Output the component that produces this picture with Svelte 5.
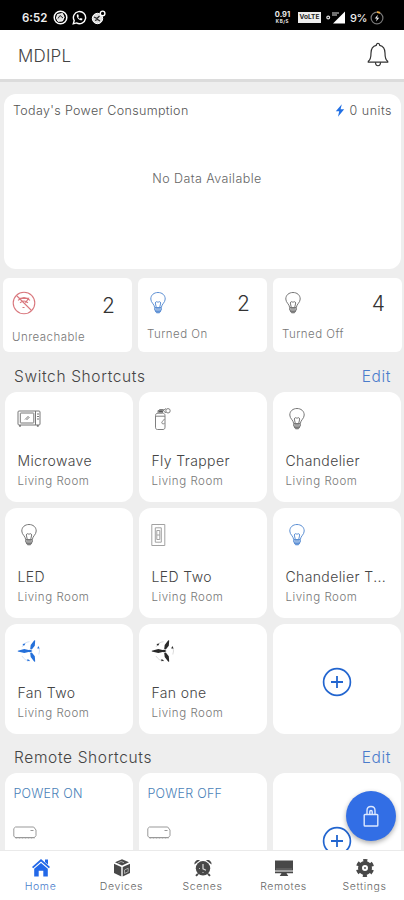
<script>
  const stats = [
    { icon: 'unreachable', label: 'Unreachable', count: 2, low: true },
    { icon: 'bulb-on', label: 'Turned On', count: 2 },
    { icon: 'bulb', label: 'Turned Off', count: 4 }
  ];
  const switches = [
    { icon: 'microwave', name: 'Microwave' },
    { icon: 'spray', name: 'Fly Trapper' },
    { icon: 'bulb', name: 'Chandelier' },
    { icon: 'bulb', name: 'LED' },
    { icon: 'switch', name: 'LED Two' },
    { icon: 'bulb-on', name: 'Chandelier T...' },
    { icon: 'fan-on', name: 'Fan Two' },
    { icon: 'fan', name: 'Fan one' }
  ];
  const tabs = ['Home', 'Devices', 'Scenes', 'Remotes', 'Settings'];
</script>

{#snippet plus()}
  <svg class="plus" width="30" height="30" viewBox="0 0 30 30" fill="none" stroke="#2265cf">
    <circle cx="15" cy="15" r="13.4" stroke-width="1.7" />
    <path d="M15 9v12M9 15h12" stroke-width="1.8" />
  </svg>
{/snippet}

{#snippet glyph(icon)}
  {#if icon === 'bulb' || icon === 'bulb-on'}
    <svg width="24" height="24" viewBox="0 0 24 24" fill="none" stroke={icon === 'bulb' ? '#777' : '#5d90d4'} stroke-width="1">
      <path d="M8.7 16.5C8.3 13 4.8 11.600 4.800 8C4.800 4 8 1.500 12 1.500S19.200 4 19.200 8C19.200 11.600 15.700 13 15.300 16.500" />
      <path d="M8.700 16.500h6.600v2.700H8.700zM9.500 19.200l1 2.600h3l1-2.600M9 20.400h6" />
      <path d="M10.200 16l-.9-4c.5-1.700 1.700-1.700 2.700-.5 1-1.200 2.200-1.200 2.700.5l-.9 4" />
      <path d="M10.500 21h3M9.300 17.900h5.400" stroke-width="1.400" />
    </svg>
  {:else if icon === 'unreachable'}
    <svg width="24" height="24" viewBox="0 0 24 24" fill="none" stroke="#d9777d" stroke-width="1.100">
      <circle cx="12" cy="12" r="10.800" />
      <path d="M4.500 4.500l15 15M6 9.300C9.800 5.900 14.200 5.900 18 9.300M8 11.800c2.500-2.200 5.500-2.200 8 0M7 7.400h9.500l-3 4.500M10.500 16.500h2" />
    </svg>
  {:else if icon === 'microwave'}
    <svg width="24" height="24" viewBox="0 0 24 24" fill="none" stroke="#777" stroke-width="1">
      <rect x="1" y="4" width="22" height="14" rx="1" />
      <rect x="3.300" y="6" width="13.500" height="10" rx=".5" />
      <path d="M18.500 4v14M8 12.500l3.500-3.500M9.500 13l3-3" />
      <path d="M20 7h2M20 9.500h2M20 12h2" />
      <path d="M3 18v1.700M20.800 18v1.700" stroke-width="1.800" />
    </svg>
  {:else if icon === 'spray'}
    <svg width="24" height="24" viewBox="0 0 24 24" fill="none" stroke="#808080" stroke-width="1">
      <path d="M4.500 8.500c0-1.500 1-2.300 2.500-2.300h4.500c1.500 0 2.500.8 2.500 2.300v11.700c0 1.500-.7 2.300-2 2.300H6.500c-1.300 0-2-.8-2-2.300zM4.500 9.200H14" />
      <path d="M7 5.800V3.500h4.500v2.300M8.500 2.500h4v1.500h-4zM13 3l2-1.500M13 4.500l2 1.200M13.500 12c-1.600 2-3 3-2.700 4 .4 1 1.700 1.100 2.700.4" />
      <circle cx="17" cy="3.800" r="2.200" />
      <path d="M7.500 4.800h4" stroke="#444" stroke-width="1.300" />
    </svg>
  {:else if icon === 'switch'}
    <svg width="24" height="24" viewBox="0 0 24 24" fill="none" stroke="#a2a2a2" stroke-width="1">
      <path d="M.8 1.500h13v21H.8zM4.300 4.800h6v14.400h-6zM5.800 7.500h3v9h-3zM5.800 12h3M7.300 3h.1M7.300 21h.1" />
    </svg>
  {:else}
    <svg width="24" height="24" viewBox="0 0 24 24" fill={icon === 'fan' ? '#292929' : '#2470da'}>
      <path d="M13.500 10.800l2 1.200-2 1.300-2-.2-4.200.9L.8 12.400v-.7l6.500-1.600 4.200.8z" />
      <path d="M13.200 10l.5-4 3.600-4.700.9.300-.4 5.200-3 3.600zM13.200 14l.5 4 3.600 4.700.9-.3-.4-5.200-3-3.600z" />
      <path d="M5 8a9 9 0 0 1 7.500-5.300M5 17a10 10 0 0 0 8 5M21.800 8.500a9 9 0 0 1 0 7" fill="none" stroke={icon === 'fan' ? '#ccc' : '#bfd4f2'} stroke-width=".7" />
      <path d="M5.500 5l3-.4-1.600 2.500zM10.500 20l2.600 1.500-2.800.8zM21.300 7l1.300 2.500h-2.400z" />
    </svg>
  {/if}
{/snippet}

<div class="screen">
  <div class="status">
    <div class="left">
      <b class="clock">6:52</b>
      <svg width="15" height="15" viewBox="0 0 15 15" fill="none" stroke="#fff">
        <circle cx="7.500" cy="7.500" r="6.300" stroke-width="1.500" />
        <path d="M4.500 4.500l5-1 1.600 3.800-1.600 3.700-4.500.3L3.500 8z" fill="#ddd" stroke-width="1" />
        <path d="M5 8.500l2-3 3 2.500" stroke="#222" />
      </svg>
      <svg width="15" height="15" viewBox="0 0 15 15" fill="none" stroke="#fff">
        <path d="M1.300 13.800l.9-3.200A6.100 6.100 0 1 1 4.500 12.900z" stroke-width="1.400" />
        <path d="M5 4.500c-1 3 2 6 5 5.800l.5-1.500-1.800-.8-.8.8C6.900 8.300 6.500 7.700 6.200 7l.7-.8-.8-1.900z" fill="#fff" stroke="none" />
      </svg>
      <svg width="15" height="15" viewBox="0 0 15 15" fill="none" stroke="#fff">
        <circle cx="6.500" cy="8.500" r="5.200" fill="#ddd" />
        <path d="M3 7l3 1.500L8.500 6M4 10.500l2.500-1 2.500 1.500" stroke="#222" stroke-width="1.200" />
        <circle cx="11.600" cy="3.400" r="2.300" fill="#000" stroke-width="1.400" />
      </svg>
    </div>
    <div class="right">
      <div class="speed"><b>0.91</b><b class="kb">KB/S</b></div>
      <b class="volte">VoLTE</b>
      <svg class="signal" width="20" height="13" viewBox="0 0 20 13">
        <circle cx="2.200" cy="6.500" r="1.400" fill="none" stroke="#ddd" stroke-width="1.200" />
        <path d="M19 .5V12.500H7z" fill="#fff" />
        <path d="M6 2h7M6 4h5" stroke="#ddd" stroke-width="1.200" />
      </svg>
      <b class="battery">9%</b>
      <svg width="14" height="14" viewBox="0 0 14 14" fill="none">
        <circle cx="7" cy="7" r="5.900" stroke="#777" stroke-width="1.200" />
        <path d="M7 1.100a5.900 5.900 0 0 1 3 .8" stroke="#e8a640" stroke-width="1.800" />
        <path d="M7.800 3.800L4.800 7.500h2l-.7 3L9.200 6.700h-2z" fill="#eee" />
      </svg>
    </div>
  </div>

  <header>
    <h1>MDIPL</h1>
    <svg width="22" height="26" viewBox="0 0 22 26" fill="none" stroke="#333" stroke-width="1.200">
      <path d="M9.300 3.300c0-2.600 3.400-2.600 3.400 0C16.600 4.200 18 7.300 18 11c0 5 .6 7 2.700 8.300v.9H1.300v-.9C3.400 18 4 16 4 11c0-3.700 1.400-6.800 5.300-7.700z" />
      <path d="M8.500 20.300c0 4.600 5 4.600 5 0" />
    </svg>
  </header>

  <main>
    <section class="power">
      <div class="power-head">
        <span class="title">Today's Power Consumption</span>
        <span class="units">
          <svg width="10" height="13" viewBox="0 0 10 13" fill="#2270e4"><path d="M6.800.3L.8 7.300h3.400L3 12.700l6.200-7.400H5.600z" /></svg>
          0 units
        </span>
      </div>
      <p>No Data Available</p>
    </section>

    <div class="stats">
      {#each stats as s}
        <div class="stat" class:low={s.low}>
          <div class="stat-top">{@render glyph(s.icon)}<span class="count">{s.count}</span></div>
          <span class="stat-label">{s.label}</span>
        </div>
      {/each}
    </div>

    <div class="heading"><h2>Switch Shortcuts</h2><a href="#switches">Edit</a></div>
    <div class="grid">
      {#each switches as s}
        <div class="card">
          {@render glyph(s.icon)}
          <span class="name">{s.name}</span>
          <span class="room">Living Room</span>
        </div>
      {/each}
      <div class="card add">{@render plus()}</div>
    </div>

    <div class="heading second"><h2>Remote Shortcuts</h2><a href="#remotes">Edit</a></div>
    <div class="grid remotes">
      {#each ['POWER ON', 'POWER OFF'] as label}
        <div class="card remote">
          <span>{label}</span>
          <svg width="24" height="13" viewBox="0 0 24 13" fill="none" stroke="#999">
            <path d="M2.500 1h18.200l2.300 3v5.500L21.500 11.500H2L.8 10V2.500z" />
            <path d="M2.500 11.700h19" stroke-width="1.600" stroke-dasharray="2 1" />
            <path d="M17.500 4.500h3" />
          </svg>
        </div>
      {/each}
      <div class="card add cut">{@render plus()}</div>
    </div>
  </main>

  <nav>
    {#each tabs as tab, i}
      <div class="tab" class:active={i === 0}>
        <svg width="20" height="20" viewBox="0 0 20 20" fill="#484848">
          {#if i === 0}
            <path d="M10 1l9 8-1.200 1.300L10 3.600l-7.800 6.700L1 9zM14 1.500h3v5l-3-2.600z" fill="#2268e8" />
            <path d="M10 5l6.800 5.800V18.500h-4.500v-5.700H7.700v5.700H3.200v-7.700z" fill="#2268e8" />
          {:else if i === 1}
            <path d="M10 1.300l7 3-7 3.300-7-3.300zM2 5.700l7.300 3.400v9.400L2 15zM18 5.700l-7.300 3.400v9.400L18 15z" />
            <path d="M12.500 12l3.700-1.800v3.500l-3.700 1.800zM6 5l3-1.500 3 1.200" stroke="#bbb" stroke-width=".8" fill="none" />
          {:else if i === 2}
            <path d="M1.500 6.500C1 3.500 4 1 7 2.200zM18.500 6.500C19 3.500 16 1 13 2.200zM4.200 15.200l1.500 1.400-2 2-1.400-1.400zM15.800 15.200l-1.500 1.400 2 2 1.400-1.400z" />
            <circle cx="10" cy="10.300" r="7.200" />
            <path d="M10 6v4.800l3 1.400M6 10.500h.8M10 14.700v-.8" fill="none" stroke="#ddd" stroke-width="1.200" />
          {:else if i === 3}
            <path d="M1 2.500h18v10H1zM1 13.500h18v1.800h-6.500l1.800 2.700H5.700l1.800-2.700H1z" />
            <path d="M2 11h16" stroke="#888" stroke-width=".7" />
          {:else}
            <circle cx="10" cy="10" r="5" fill="none" stroke="#484848" stroke-width="4" />
            <circle cx="10" cy="10" r="7.600" fill="none" stroke="#484848" stroke-width="3" stroke-dasharray="4 3.960" stroke-dashoffset="-2" />
            <circle cx="10" cy="10" r=".9" />
          {/if}
        </svg>
        <span>{tab}</span>
      </div>
    {/each}
  </nav>

  <button class="fab" aria-label="Lock">
    <svg width="18" height="24" viewBox="0 0 18 24" fill="none" stroke="#dce8ff" stroke-width="1.400">
      <rect x="2.200" y="10.500" width="13.600" height="11.500" rx=".8" />
      <path d="M5 10.500V6.500c0-5.300 8-5.300 8 0v4M7.800 10V7.700c0-1.700 2.400-1.700 2.400 0V10" />
    </svg>
  </button>
</div>

<style>
  :global(body) { margin: 0; }
  .screen {
    position: relative; width: 404px; height: 900px; overflow: hidden;
    display: flex; flex-direction: column; background: #eee;
    font-family: Inter, "Liberation Sans", sans-serif; font-weight: 300; color: #555;
  }
  .screen * { box-sizing: border-box; }
  svg { display: block; flex: none; }
  h1, h2, p { margin: 0; font-weight: 300; }
  .status {
    height: 30px; flex: none; background: #000; color: #eee;
    display: flex; justify-content: space-between; align-items: center; padding: 5px 20px 0 22px;
  }
  .left, .right { display: flex; align-items: center; }
  .left { gap: 4px; }
  .clock { font: 600 11.500px/14px Inter, sans-serif; width: 27px; }
  .speed { display: flex; flex-direction: column; align-items: center; width: 17px; margin-right: 7px; }
  .speed b { font: 700 7.500px/9px Inter, sans-serif; }
  .speed .kb { font-size: 4.500px; line-height: 6px; letter-spacing: .6px; }
  .volte {
    width: 23px; height: 11px; background: #eee; color: #222; text-align: center;
    font: 700 6.500px/11px Inter, sans-serif; margin-right: 5px;
  }
  .battery { font: 500 11px/14px Inter, sans-serif; width: 17px; margin: 0 3px 0 4px; white-space: nowrap; letter-spacing: -.5px; }
  header {
    height: 52px; flex: none; background: #fff; border-bottom: 3px solid #dcdcdc;
    display: flex; justify-content: space-between; align-items: center; padding: 0 15px 0 18px;
  }
  h1 { font-size: 17px; letter-spacing: .2px; color: #444; padding-top: 2px; }
  main { flex: 1; min-height: 0; overflow: hidden; padding-top: 12px; }
  .power { margin: 0 3px 0 4px; height: 175px; background: #fff; border-radius: 12px; padding: 9px 9px 0; }
  .power-head { display: flex; justify-content: space-between; align-items: center; height: 15px; font-size: 12.500px; }
  .title { letter-spacing: .35px; }
  .units { display: flex; align-items: center; gap: 5px; letter-spacing: .5px; }
  .power p { text-align: center; font-size: 12.500px; line-height: 16px; letter-spacing: .42px; padding: 53px 0 0 9px; color: #666; }
  .stats { display: grid; grid-template-columns: repeat(3, 129px); gap: 6px; padding: 9px 0 0 3px; }
  .stat { height: 74px; background: #fff; border-radius: 6px; padding: 13px 17px 0 9px; }
  .stat-top { display: flex; justify-content: space-between; align-items: center; height: 24px; }
  .stat:not(.low) .stat-top > :global(svg) { margin-left: -1px; }
  .count { font-size: 21px; line-height: 24px; color: #333; padding-top: 1px; }
  .low .count { padding-top: 5px; }
  .stat-label { display: block; padding-top: 12px; font-size: 11.500px; line-height: 15px; letter-spacing: .46px; color: #777; }
  .low .stat-label { padding-top: 15px; }
  .heading { height: 40px; padding: 9px 13px 0 14px; display: flex; justify-content: space-between; }
  .heading.second { height: 39px; padding-top: 8px; }
  h2, .heading a { font-size: 15.500px; line-height: 31px; letter-spacing: .64px; }
  h2 { color: #444; }
  .heading a { color: #4a7ccb; text-decoration: none; }
  .grid { display: grid; grid-template-columns: repeat(3, 128px); gap: 6px; padding-left: 5px; }
  .card { height: 110px; background: #fff; border-radius: 12px; padding: 15px 8px 0 12.400px; display: flex; flex-direction: column; white-space: nowrap; }
  .name { font-size: 14px; line-height: 18px; letter-spacing: .4px; margin-top: 21.400px; color: #444; }
  .room { font-size: 11.500px; line-height: 15px; letter-spacing: .55px; margin-top: 3.600px; color: #777; }
  .add { justify-content: center; align-items: center; padding: 5px 1px 0 0; }
  .remote { padding: 13px 0 0 8.400px; }
  .remote span { font-size: 12.500px; line-height: 16px; letter-spacing: .25px; color: #4a7fb8; margin-bottom: 24px; }
  .cut { justify-content: flex-start; padding-top: 53px; }
  nav { height: 50px; flex: none; background: #fff; border-top: 1px solid #eaeaea; display: grid; grid-template-columns: repeat(5, 81px); }
  .tab { display: flex; flex-direction: column; align-items: center; padding-top: 7px; }
  .tab span { font-size: 10.500px; line-height: 14px; letter-spacing: .6px; margin-top: 2px; color: #666; }
  .tab.active span { color: #4a7ccb; }
  .fab {
    position: absolute; left: 346px; top: 791px; width: 50px; height: 50px; border: 0; border-radius: 50%;
    background: #326ee5; display: flex; align-items: center; justify-content: center; padding: 0; box-shadow: 0 2px 5px #0005;
  }
</style>
